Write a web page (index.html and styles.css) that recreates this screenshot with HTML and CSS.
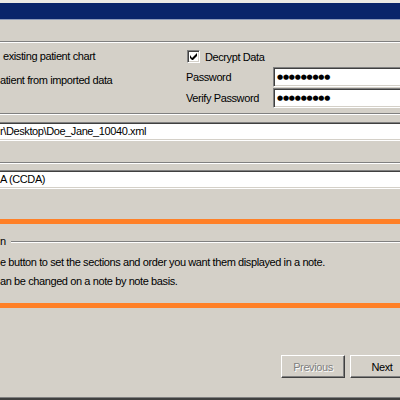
FILE: index.html
```html
<!DOCTYPE html>
<html lang="en">
<head>
  <meta charset="UTF-8">
  <title>Import Patient Data</title>
  <link rel="stylesheet" href="styles.css">
</head>
<body>
  <div class="window">
    <div class="top-edge"></div>
    <div class="banner"></div>
    <div class="banner-edge"></div>
    <div class="header-space"></div>
    <div class="rule"></div>

    <!-- import options -->
    <div class="options">
      <div class="choices">
        <div class="line">existing patient chart</div>
        <div class="line flush">atient from imported data</div>
      </div>
      <div class="security">
        <div class="check-row">
          <span class="checkbox">
            <svg width="7" height="7" viewBox="0 0 7 7"><path d="M0 2v3l2 2h1l4-4V0L2 5z" fill="#000"/></svg>
          </span>
          <span>Decrypt Data</span>
        </div>
        <div class="field-row">
          <span class="field-label">Password</span>
          <span class="field pass">●●●●●●●●●</span>
        </div>
        <div class="field-row">
          <span class="field-label">Verify Password</span>
          <span class="field pass">●●●●●●●●●</span>
        </div>
      </div>
    </div>
    <div class="rule"></div>

    <div class="field wide file">r\Desktop\Doe_Jane_10040.xml</div>
    <div class="rule second"></div>
    <div class="field wide format">A (CCDA)</div>

    <div class="orange-bar first"></div>

    <!-- note sections -->
    <div class="group">
      <div class="group-title">
        <span>n</span>
        <span class="group-line"></span>
      </div>
      <p>e button to set the sections and order you want them displayed in a note.</p>
      <p>an be changed on a note by note basis.</p>
    </div>

    <div class="orange-bar"></div>

    <div class="buttons">
      <button class="btn" disabled>Previous</button>
      <button class="btn">Next</button>
    </div>

    <div class="bottom-edge"></div>
  </div>
</body>
</html>
```

FILE: styles.css
```css
body {
  margin: 0;
  padding: 0;
  width: 400px;
  height: 400px;
  overflow: hidden;
  background-color: #d4d0c8; /* classic dialog grey */
  font-family: "Liberation Sans", Arial, sans-serif;
  font-size: 11px;
  letter-spacing: -0.4px;
  color: #000;
}
.window {
  display: flex;
  flex-direction: column;
  height: 400px;
}
.top-edge {
  height: 3px;
  background-color: #ece9e4;
}
.banner {
  height: 16px;
  background-color: #0a246a; /* title navy */
}
.banner-edge {
  height: 1px;
  background-color: #8f9ab8;
}
.header-space {
  height: 21px;
}
.rule {
  height: 1px;
  background-color: #808080;
  border-bottom: 1px solid #fff;
}
.rule.second {
  margin-top: 21px;
}

/* options block */
.options {
  height: 70px;
  display: flex;
}
.choices {
  width: 186px;
  padding-top: 7px;
  display: flex;
  flex-direction: column;
  gap: 11px;
}
.choices .line {
  height: 13px;
  line-height: 13px;
  padding-left: 3px;
}
.choices .line.flush {
  padding-left: 0;
}
.security {
  flex: 1;
  padding-top: 7px;
  display: flex;
  flex-direction: column;
}
.check-row {
  display: flex;
  align-items: center;
  gap: 5px;
  height: 13px;
  margin-left: 1px;
  margin-bottom: 4px;
}
.checkbox {
  width: 9px;
  height: 9px;
  background-color: #fff;
  border-top: 1px solid #808080;
  border-left: 1px solid #808080;
  border-right: 1px solid #fff;
  border-bottom: 1px solid #fff;
  box-shadow: inset 1px 1px #404040, inset -1px -1px #d4d0c8;
  padding: 1px;
  display: flex;
  align-items: center;
  justify-content: center;
}
.field-row {
  display: flex;
  align-items: center;
  height: 20px;
  margin-bottom: 1px;
}
.field-label {
  width: 87px;
}
.field {
  background-color: #fff;
  border-top: 1px solid #808080;
  border-bottom: 1px solid #fff;
  box-shadow: inset 0 1px #404040, inset 0 -1px #d4d0c8;
}
.field.pass {
  flex: 1;
  height: 18px;
  line-height: 18px;
  border-left: 1px solid #808080;
  box-shadow: inset 1px 1px #404040, inset 0 -1px #d4d0c8;
  padding-left: 3px;
  font-family: "DejaVu Sans", sans-serif;
  font-size: 7px;
  letter-spacing: -0.2px;
}
.field.wide {
  height: 17px;
  line-height: 17px;
  padding-left: 0;
}
.field.file {
  margin-top: 7px;
}
.field.format {
  margin-top: 6px;
}

.orange-bar {
  height: 5px;
  background-color: #ff8027;
}
.orange-bar.first {
  margin-top: 30px;
}

/* note group */
.group {
  height: 79px;
}
.group-title {
  display: flex;
  align-items: center;
  gap: 5px;
  height: 13px;
  margin-top: 10px;
}
.group-line {
  flex: 1;
  height: 1px;
  background-color: #808080;
  border-bottom: 1px solid #fff;
  margin-top: 2px;
}
.group p {
  margin: 0;
  height: 19px;
  line-height: 19px;
}
.group p:first-of-type {
  margin-top: 6px;
}

.buttons {
  display: flex;
  gap: 5px;
  padding-left: 281px;
  margin-top: 47px;
}
.btn {
  flex: none;
  width: 64px;
  height: 23px;
  padding: 0;
  background-color: #d4d0c8;
  border-top: 1px solid #fff;
  border-left: 1px solid #fff;
  border-right: 1px solid #404040;
  border-bottom: 1px solid #404040;
  box-shadow: inset -1px -1px #808080;
  font-family: "Liberation Sans", Arial, sans-serif;
  font-size: 11px;
  letter-spacing: -0.4px;
  color: #000;
}
.btn:disabled {
  color: #808080;
  text-shadow: 1px 1px #fff;
}

.bottom-edge {
  margin-top: auto;
  height: 1px;
  background-color: #808080;
  border-bottom: 2px solid #404040;
}
```
